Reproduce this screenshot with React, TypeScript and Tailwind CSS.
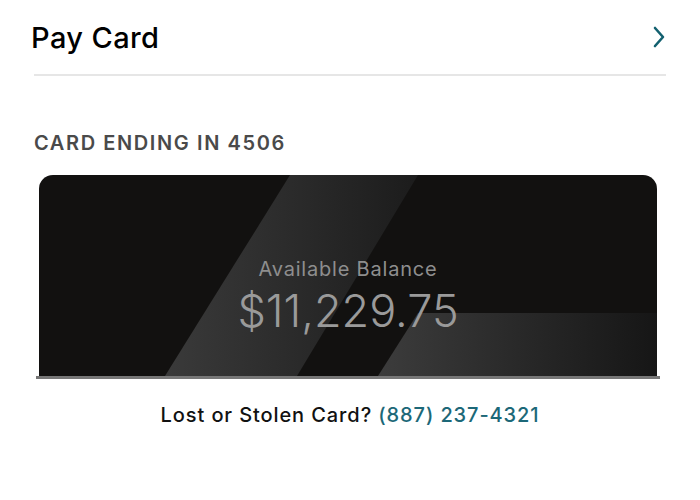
import React from "react";

export default function App() {
  return (
    <div className="w-[700px] h-[500px] bg-white" style={{ fontFamily: "Inter, 'Open Sans', sans-serif" }}>
      <div className="flex items-center justify-between pl-[31px] pr-[34px] h-[74px] pb-[1px]">
        <span className="text-[29px] font-medium text-black tracking-[0.4px] translate-y-[1px]">Pay Card</span>
        <svg width="14" height="22" viewBox="0 0 14 22" fill="none">
          <path d="M3 2 L11 11 L3 20" stroke="#12606f" strokeWidth="2.6" strokeLinecap="round" strokeLinejoin="round" />
        </svg>
      </div>
      <div className="mx-[34px] h-[2px] bg-[#e6e6e6]" />
      <div className="pl-[34px] pt-[54px] text-[20px] font-semibold text-[#4a4a4a] leading-[26px] tracking-[1.6px]">
        CARD ENDING IN 4506
      </div>
      <div className="ml-[36px] w-[624px] mt-[19px]">
        <div className="relative mx-[3px] h-[201px] rounded-t-[14px] bg-[#121110] overflow-hidden">
          <svg className="absolute inset-0" width="618" height="201" viewBox="0 0 618 201">
            <defs>
              <linearGradient id="s1" x1="0" y1="0" x2="1" y2="0">
                <stop offset="0" stopColor="#3a3a3a" />
                <stop offset="1" stopColor="#1c1c1c" />
              </linearGradient>
              <linearGradient id="s2" x1="0" y1="0" x2="1" y2="0">
                <stop offset="0" stopColor="#3c3c3c" />
                <stop offset="1" stopColor="#161616" />
              </linearGradient>
            </defs>
            <polygon points="251,0 379,0 258,201 126,201" fill="url(#s1)" />
            <polygon points="379,138 618,138 618,201 339,201" fill="url(#s2)" />
          </svg>
          <div className="relative flex flex-col items-center pt-[81px]">
            <span className="text-[20px] text-[#8e8e8e] leading-[26px] font-normal tracking-[0.8px]">Available Balance</span>
            <span className="mt-[2px] text-[45px] text-[#9a9a9a] leading-[54px] font-light tracking-[0px]">$11,229.75</span>
          </div>
        </div>
        <div className="h-[3px] bg-[#777777]" />
      </div>
      <div className="mt-[22px] text-center text-[20px] font-medium text-[#111] leading-[28px] tracking-[0.9px]">
        Lost or Stolen Card? <span className="text-[#1c6878]">(887) 237-4321</span>
      </div>
    </div>
  );
}
